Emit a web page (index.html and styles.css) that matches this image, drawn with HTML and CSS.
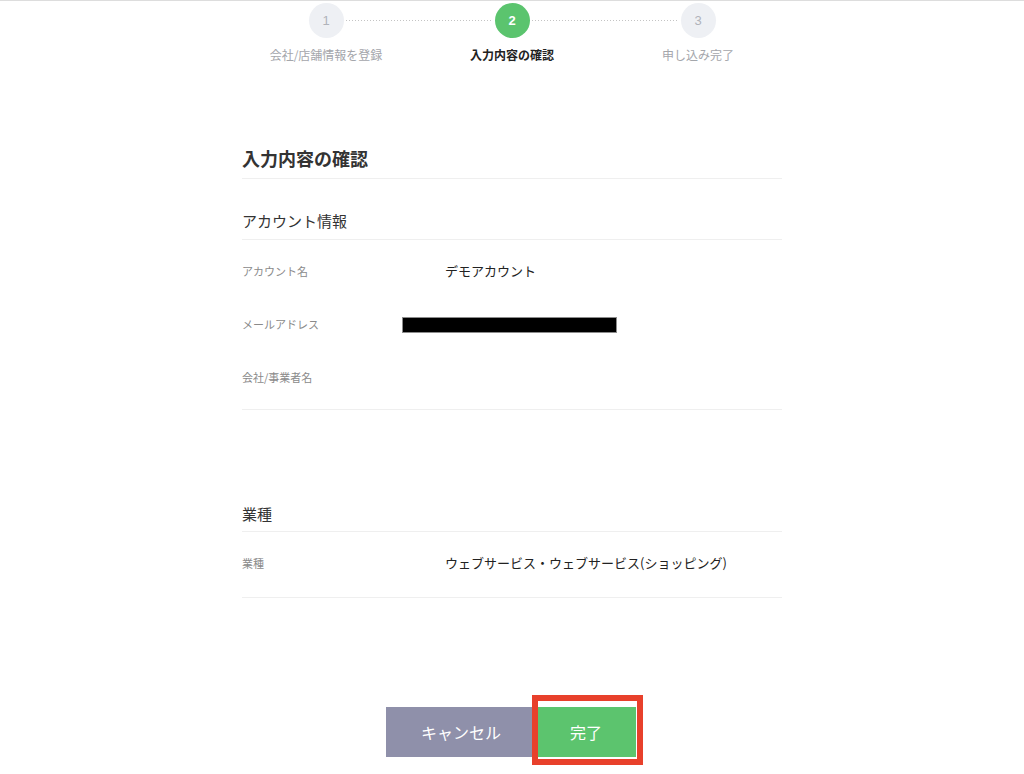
FILE: index.html
```html
<!DOCTYPE html>
<html lang="ja">
<head>
<meta charset="utf-8">
<title>入力内容の確認</title>
<link rel="stylesheet" href="styles.css">
</head>
<body>
<div class="page">
  <ol class="stepper">
    <li class="step done">
      <span class="circle">1</span>
      <span class="step-label">会社/店舗情報を登録</span>
    </li>
    <li class="step active">
      <span class="circle">2</span>
      <span class="step-label">入力内容の確認</span>
    </li>
    <li class="step">
      <span class="circle">3</span>
      <span class="step-label">申し込み完了</span>
    </li>
  </ol>

  <main class="content">
    <h1 class="title">入力内容の確認</h1>

    <section class="section account">
      <h2 class="section-head">アカウント情報</h2>
      <div class="rows">
        <div class="row">
          <div class="label">アカウント名</div>
          <div class="value">デモアカウント</div>
        </div>
        <div class="row">
          <div class="label">メールアドレス</div>
          <div class="value"><span class="redact"></span></div>
        </div>
        <div class="row">
          <div class="label">会社/事業者名</div>
          <div class="value"></div>
        </div>
      </div>
    </section>

    <section class="section industry">
      <h2 class="section-head">業種</h2>
      <div class="rows rows-last">
        <div class="row">
          <div class="label">業種</div>
          <div class="value">ウェブサービス・ウェブサービス(ショッピング)</div>
        </div>
      </div>
    </section>
  </main>

  <div class="actions">
    <button class="btn btn-cancel" type="button">キャンセル</button>
    <span class="highlight-wrap">
      <button class="btn btn-done" type="button">完了</button>
      <span class="highlight"></span>
    </span>
  </div>
</div>
</body>
</html>
```

FILE: styles.css
```css
* {
  box-sizing: border-box;
}

html, body {
  margin: 0;
  padding: 0;
  background: #ffffff;
}

body {
  font-family: "Noto Sans CJK JP", "Noto Sans", "Liberation Sans", sans-serif;
  color: #333333;
  border-top: 1px solid #dddddd;
  height: 774px;
  overflow: hidden;
}

.page {
  width: 1024px;
}

/* Stepper */
.stepper {
  list-style: none;
  margin: 0 auto;
  padding: 2px 0 0;
  width: 558px;
  display: grid;
  grid-template-columns: repeat(3, 1fr);
}

.step {
  position: relative;
  display: flex;
  flex-direction: column;
  align-items: center;
}

.step:not(:last-child)::after {
  content: "";
  position: absolute;
  top: 17px;
  left: calc(50% + 20px);
  width: calc(100% - 40px);
  height: 1px;
  background-image: linear-gradient(to right, #c4c4c4 1px, transparent 1px);
  background-size: 3px 1px;
  background-repeat: repeat-x;
}

.circle {
  width: 35px;
  height: 35px;
  border-radius: 50%;
  background: #eef0f4;
  color: #b0b3ba;
  font-size: 13px;
  line-height: 35px;
  text-align: center;
  font-family: "Liberation Sans", "Noto Sans", sans-serif;
}

.step.active .circle {
  background: #5bc46e;
  color: #ffffff;
  font-weight: bold;
}

.step-label {
  margin-top: 9px;
  font-size: 12px;
  line-height: 16px;
  color: #a4a6ab;
  white-space: nowrap;
}

.step.active .step-label {
  color: #222222;
  font-weight: 700;
}

/* Content */
.content {
  width: 540px;
  margin: 82px auto 0;
}

.title {
  margin: 0;
  font-size: 18px;
  line-height: 26px;
  font-weight: 700;
  color: #333333;
  padding-bottom: 7px;
  border-bottom: 1px solid #efefef;
}

.section-head {
  margin: 0;
  font-size: 15px;
  line-height: 22px;
  font-weight: 400;
  color: #333333;
  padding-bottom: 7px;
  border-bottom: 1px solid #efefef;
}

.account {
  margin-top: 31px;
}

.industry {
  margin-top: 93px;
}

.industry .section-head {
  padding-bottom: 6px;
}

.rows {
  padding: 4px 0 6px;
  border-bottom: 1px solid #efefef;
}

.rows-last {
  padding-bottom: 8px;
}

.row {
  height: 53px;
  display: flex;
  align-items: center;
}

.label {
  width: 203px;
  flex: none;
  font-size: 11px;
  color: #8a8a8a;
}

.value {
  position: relative;
  flex: 1;
  font-size: 13px;
  color: #222222;
  align-self: stretch;
  display: flex;
  align-items: center;
}

.redact {
  position: absolute;
  left: -43px;
  top: 20px;
  width: 215px;
  height: 16px;
  background: #000000;
  border: 1px solid #8c8c8c;
}

/* Actions */
.actions {
  display: flex;
  justify-content: center;
  margin-top: 109px;
  padding-right: 2px;
}

.btn {
  border: none;
  height: 50px;
  font-family: "Noto Sans CJK JP", "Noto Sans", sans-serif;
  font-size: 16px;
  color: #ffffff;
  padding: 0;
  cursor: pointer;
}

.btn-cancel {
  width: 150px;
  background: #8f90aa;
}

.btn-done {
  width: 100px;
  background: #5cc46e;
  display: block;
}

.highlight-wrap {
  position: relative;
  display: block;
}

.highlight {
  position: absolute;
  left: -4px;
  top: -12px;
  width: 111px;
  height: 70px;
  border: 6px solid #e8402b;
  pointer-events: none;
}
```
